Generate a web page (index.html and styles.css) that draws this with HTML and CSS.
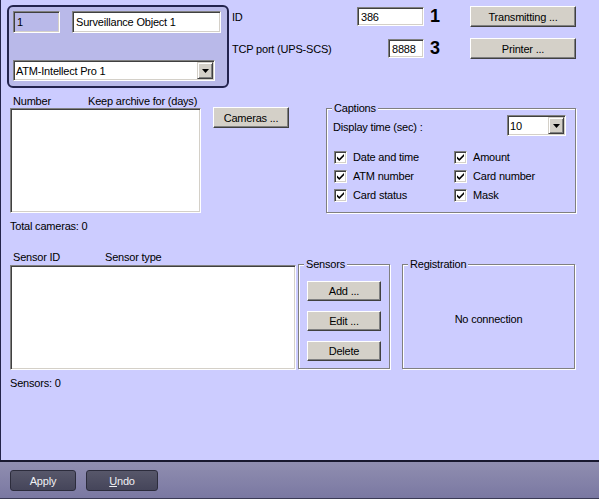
FILE: index.html
```html
<!DOCTYPE html>
<html>
<head>
<meta charset="utf-8">
<link rel="stylesheet" href="styles.css">
</head>
<body>
<div class="window">
  <div class="content">
    <div class="top">
      <div class="panel">
        <div class="panel-row">
          <div class="field field-num">1</div>
          <div class="field field-name">Surveillance Object 1</div>
        </div>
        <div class="field select select-type">
          <span class="select-text">ATM-Intellect Pro 1</span>
          <span class="drop"><svg width="7" height="4" viewBox="0 0 7 4"><polygon points="0,0 7,0 3.5,4" fill="#000"/></svg></span>
        </div>
      </div>
      <div class="params">
        <span class="label">ID</span>
        <div class="field field-id">386</div>
        <span class="marker">1</span>
        <button class="btn btn-wide">Transmitting ...</button>
        <span class="label">TCP port (UPS-SCS)</span>
        <div class="field field-port">8888</div>
        <span class="marker">3</span>
        <button class="btn btn-wide">Printer ...</button>
      </div>
    </div>

    <div class="middle">
      <div class="cameras">
        <div class="list-head"><span class="col-number">Number</span><span>Keep archive for (days)</span></div>
        <div class="field listbox list-cameras"></div>
        <div class="count">Total cameras: 0</div>
      </div>
      <button class="btn btn-cameras">Cameras ...</button>
      <div class="group captions">
        <span class="legend">Captions</span>
        <div class="display-row">
          <span class="display-label">Display time (sec) :</span>
          <div class="field select select-time">
            <span class="select-text">10</span>
            <span class="drop"><svg width="7" height="4" viewBox="0 0 7 4"><polygon points="0,0 7,0 3.5,4" fill="#000"/></svg></span>
          </div>
        </div>
        <div class="checks">
          <label class="check"><span class="field box"><svg width="9" height="9" viewBox="0 0 9 9"><path d="M1 3.5 L3.3 5.8 L8 1.1 L8 3.3 L3.3 8 L1 5.7 Z" fill="#000"/></svg></span>Date and time</label>
          <label class="check"><span class="field box"><svg width="9" height="9" viewBox="0 0 9 9"><path d="M1 3.5 L3.3 5.8 L8 1.1 L8 3.3 L3.3 8 L1 5.7 Z" fill="#000"/></svg></span>Amount</label>
          <label class="check"><span class="field box"><svg width="9" height="9" viewBox="0 0 9 9"><path d="M1 3.5 L3.3 5.8 L8 1.1 L8 3.3 L3.3 8 L1 5.7 Z" fill="#000"/></svg></span>ATM number</label>
          <label class="check"><span class="field box"><svg width="9" height="9" viewBox="0 0 9 9"><path d="M1 3.5 L3.3 5.8 L8 1.1 L8 3.3 L3.3 8 L1 5.7 Z" fill="#000"/></svg></span>Card number</label>
          <label class="check"><span class="field box"><svg width="9" height="9" viewBox="0 0 9 9"><path d="M1 3.5 L3.3 5.8 L8 1.1 L8 3.3 L3.3 8 L1 5.7 Z" fill="#000"/></svg></span>Card status</label>
          <label class="check"><span class="field box"><svg width="9" height="9" viewBox="0 0 9 9"><path d="M1 3.5 L3.3 5.8 L8 1.1 L8 3.3 L3.3 8 L1 5.7 Z" fill="#000"/></svg></span>Mask</label>
        </div>
      </div>
    </div>

    <div class="bottom">
      <div class="sensors-list">
        <div class="list-head list-head-sensors"><span class="col-sensor">Sensor ID</span><span>Sensor type</span></div>
        <div class="field listbox list-sensors"></div>
        <div class="count">Sensors: 0</div>
      </div>
      <div class="group sensors-group">
        <span class="legend">Sensors</span>
        <button class="btn btn-sensor">Add ...</button>
        <button class="btn btn-sensor">Edit ...</button>
        <button class="btn btn-sensor">Delete</button>
      </div>
      <div class="group registration">
        <span class="legend">Registration</span>
        <span>No connection</span>
      </div>
    </div>
  </div>
  <div class="footer">
    <button class="btn-dark btn-apply">Apply</button>
    <button class="btn-dark btn-undo"><u>U</u>ndo</button>
  </div>
</div>
</body>
</html>
```
FILE: styles.css
```css
html, body {
  margin: 0;
  padding: 0;
}
body {
  font: 11px "Liberation Sans", Arial, sans-serif;
  letter-spacing: -0.2px;
  color: #000;
  background: #ccccff;
}
.window {
  width: 599px;
  height: 499px;
  display: flex;
  flex-direction: column;
  overflow: hidden;
}
.content {
  height: 460px;
  flex: none;
  box-sizing: border-box;
  border-left: 1px solid #24244a;
  background: #ccccff;
}

/* sunken field */
.field {
  box-sizing: border-box;
  border: 1px solid;
  border-color: #808080 #ffffff #ffffff #808080;
  box-shadow: inset 1px 1px 0 #404040, inset -1px -1px 0 #d4d0c8;
  background: #fff;
  padding: 0 3px;
  display: flex;
  align-items: center;
  white-space: nowrap;
}

/* raised button */
.btn {
  box-sizing: border-box;
  height: 21px;
  font: inherit;
  letter-spacing: inherit;
  color: #000;
  background: #d4d0c8;
  border: 1px solid;
  border-color: #ffffff #404040 #404040 #ffffff;
  box-shadow: inset -1px -1px 0 #808080;
  padding: 0;
  margin: 0;
}

/* top area */
.top {
  display: flex;
  height: 95px;
}
.panel {
  margin: 5px 0 0 6px;
  width: 222px;
  height: 83px;
  box-sizing: border-box;
  border: 2px solid #23234d;
  border-radius: 6px;
  background: #b9b9e9;
  padding: 4px 6px 0 4px;
}
.panel-row {
  display: flex;
  gap: 12px;
}
.field-num {
  width: 47px;
  height: 22px;
  background: #b9b9e9;
}
.field-name {
  width: 149px;
  height: 22px;
}
.select {
  justify-content: space-between;
  padding: 0 1px 0 2px;
}
.select-type {
  width: 202px;
  height: 21px;
  margin-top: 27px;
}
.drop {
  box-sizing: border-box;
  width: 16px;
  height: 17px;
  background: #d4d0c8;
  border: 1px solid;
  border-color: #d4d0c8 #404040 #404040 #d4d0c8;
  box-shadow: inset 1px 1px 0 #fff, inset -1px -1px 0 #808080;
  display: flex;
  align-items: center;
  justify-content: center;
}
.params {
  margin-left: 3px;
  padding-top: 6px;
  width: 344px;
  height: 53px;
  display: grid;
  grid-template-columns: 1fr auto 46px 106px;
  grid-auto-rows: 21px;
  row-gap: 11px;
  align-items: center;
}
.field-id {
  width: 67px;
  height: 19px;
  justify-self: end;
}
.field-port {
  width: 36px;
  height: 19px;
  justify-self: end;
}
.marker {
  font-weight: bold;
  font-size: 18px;
  letter-spacing: 0;
  line-height: 19px;
  padding-left: 6px;
}
.btn-wide {
  width: 106px;
}

/* middle area */
.middle {
  display: flex;
  align-items: flex-start;
  height: 155px;
}
.cameras {
  margin-left: 9px;
  width: 191px;
}
.list-head {
  display: flex;
  height: 13px;
  line-height: 13px;
  padding-left: 3px;
  white-space: nowrap;
}
.col-number {
  width: 75px;
}
.listbox {
  height: 105px;
}
.count {
  margin-top: 7px;
  line-height: 13px;
}
.btn-cameras {
  margin: 12px 0 0 12px;
  width: 76px;
}

/* group boxes */
.group {
  position: relative;
  box-sizing: border-box;
  border: 1px solid #808080;
  box-shadow: inset 1px 1px 0 #fff, 1px 1px 0 #fff;
}
.legend {
  position: absolute;
  top: -7px;
  left: 5px;
  padding: 0 2px;
  line-height: 13px;
  background: #ccccff;
}
.captions {
  margin: 13px 0 0 37px;
  width: 250px;
  height: 105px;
  padding: 6px 9px 0 6px;
}
.display-row {
  display: flex;
  justify-content: space-between;
  align-items: center;
  height: 21px;
}
.display-label {
  padding-top: 2px;
}
.select-time {
  width: 59px;
  height: 21px;
}
.checks {
  display: grid;
  grid-template-columns: 120px auto;
  row-gap: 6px;
  margin-top: 15px;
  padding-left: 1px;
}
.check {
  display: flex;
  align-items: center;
  gap: 6px;
  height: 13px;
  line-height: 13px;
}
.box {
  width: 13px;
  height: 13px;
  padding: 0;
  justify-content: center;
}

/* bottom area */
.bottom {
  display: flex;
  align-items: flex-start;
}
.sensors-list {
  margin-left: 9px;
  width: 286px;
}
.list-head-sensors {
  height: 15px;
  line-height: 15px;
}
.col-sensor {
  width: 92px;
}
.sensors-group {
  margin: 14px 0 0 2px;
  width: 92px;
  height: 105px;
  padding: 16px 0 0 8px;
  display: flex;
  flex-direction: column;
  gap: 10px;
}
.btn-sensor {
  width: 74px;
  height: 20px;
}
.registration {
  margin: 14px 0 0 12px;
  width: 173px;
  height: 105px;
  padding-top: 5px;
  display: flex;
  align-items: center;
  justify-content: center;
}

/* footer */
.footer {
  height: 39px;
  flex: none;
  box-sizing: border-box;
  border-top: 2px solid #18182e;
  border-bottom: 1px solid #3a3a55;
  background: linear-gradient(#908eb0, #7a78a2);
  display: flex;
  align-items: flex-start;
  gap: 10px;
  padding: 8px 0 0 10px;
}
.btn-dark {
  box-sizing: border-box;
  height: 21px;
  margin: 0;
  padding: 0;
  font: inherit;
  letter-spacing: inherit;
  color: #f0f0f4;
  background: linear-gradient(#57576a, #45455a);
  border: 1px solid #2c2c3c;
  border-radius: 3px;
}
.btn-apply {
  width: 66px;
}
.btn-undo {
  width: 72px;
}
```
